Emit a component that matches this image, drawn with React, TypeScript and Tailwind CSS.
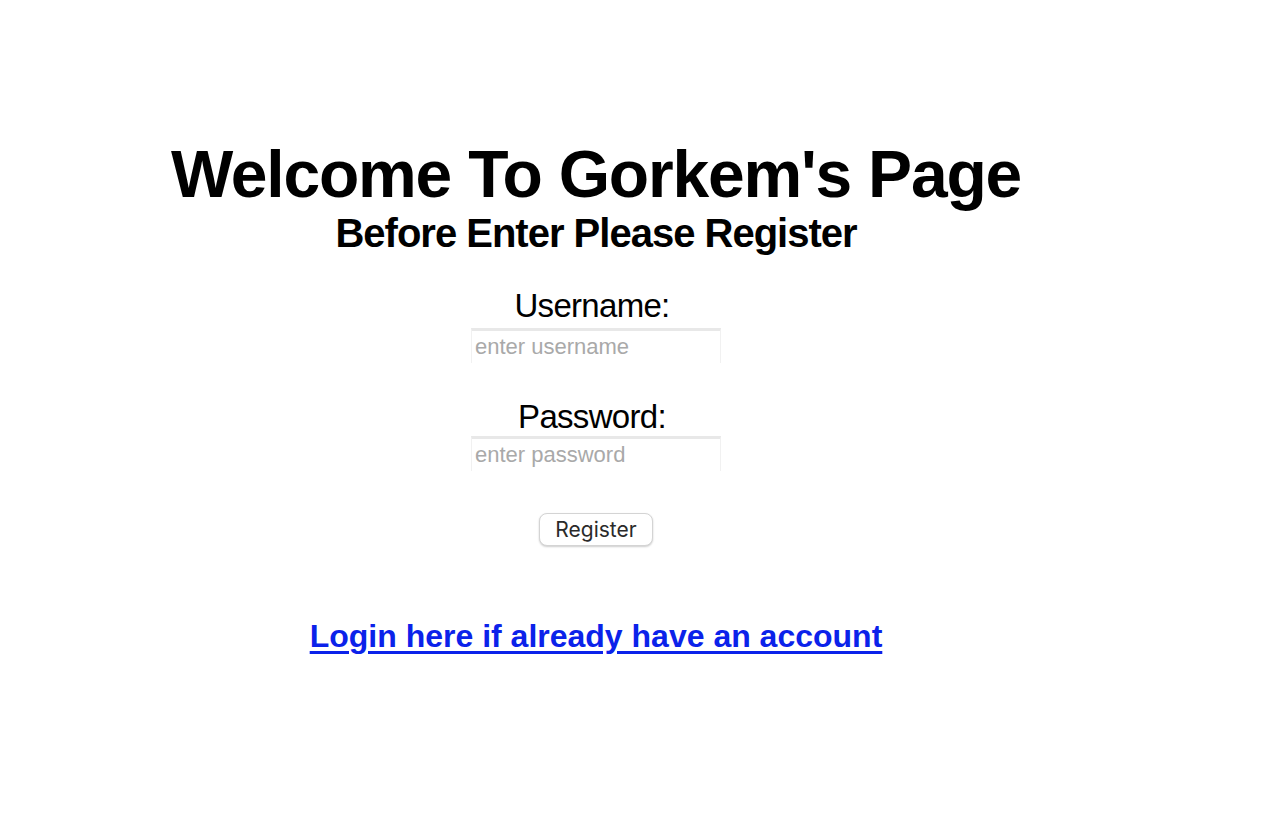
import type { FC } from "react";

const App: FC = () => {
  return (
    <div className="min-h-[824px] bg-white font-['Liberation_Sans',Arial,sans-serif] text-black">
      <div className="w-[1192px] pt-[141px] flex flex-col items-center text-center">
        {/* HEADINGS */}
        <h1 className="text-[66px] leading-none font-bold tracking-[-1.2px]">
          Welcome To Gorkem&apos;s Page
        </h1>
        <h2 className="mt-[6px] text-[40px] leading-none font-bold tracking-[-1px]">
          Before Enter Please Register
        </h2>

        {/* FORM */}
        <form className="mt-[36px] flex flex-col items-center">
          <label htmlFor="username" className="text-[33px] leading-none tracking-[-0.7px] pr-[8px]">
            Username:
          </label>
          <input
            id="username"
            type="text"
            placeholder="enter username"
            className="mt-[6px] w-[250px] h-[35px] px-[3px] text-[22px] bg-white outline-none border border-b-0 border-[#f1f1f1] border-t-[3px] border-t-[#e8e8e8] placeholder:text-[#a9a9a9]"
          />

          <label htmlFor="password" className="mt-[37px] text-[33px] leading-none tracking-[-0.7px] pr-[8px]">
            Password:
          </label>
          <input
            id="password"
            type="password"
            placeholder="enter password"
            className="mt-[3px] w-[250px] h-[35px] px-[3px] text-[22px] bg-white outline-none border border-b-0 border-[#f1f1f1] border-t-[3px] border-t-[#e8e8e8] placeholder:text-[#a9a9a9]"
          />

          <button
            type="button"
            className="mt-[42px] w-[114px] h-[33px] rounded-[8px] border border-[#d4d4d4] bg-white shadow-[0_1px_2px_rgba(0,0,0,0.2)] font-['Inter',sans-serif] text-[21px] text-[#2a2a2a]"
          >
            Register
          </button>
        </form>

        {/* LOGIN LINK */}
        <a
          href="#"
          className="mt-[74px] text-[32px] leading-none font-bold text-[#0b22ea] underline underline-offset-[4px]"
        >
          Login here if already have an account
        </a>
      </div>
    </div>
  );
};

export default App;
